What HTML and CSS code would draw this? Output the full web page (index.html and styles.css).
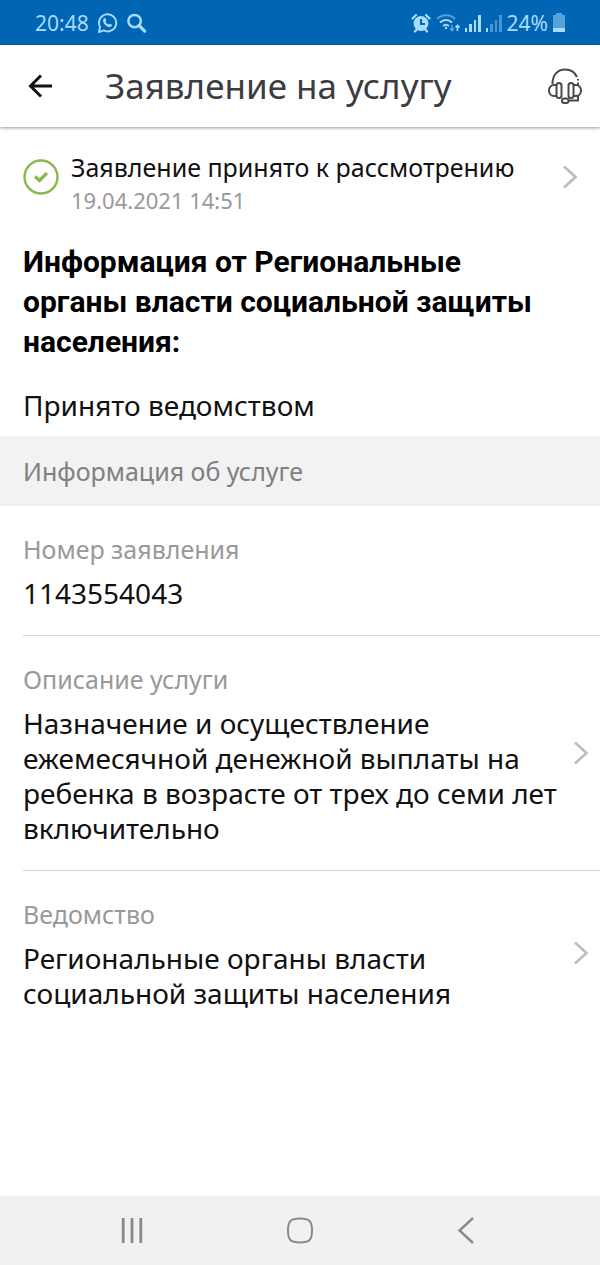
FILE: index.html
```html
<!DOCTYPE html>
<html lang="ru">
<head>
    <meta charset="UTF-8">
    <meta name="viewport" content="width=device-width, initial-scale=1.0">
    <title>Заявление на услугу</title>
    <link rel="stylesheet" href="styles.css">
</head>
<body>
    <div class="status-bar">
        <div class="status-left">
            <span>20:48</span>
            <svg width="21" height="22" viewBox="0 0 22 22" fill="none" stroke="currentColor" stroke-width="2">
                <path d="M2 20.500l1.200-5.400a9 9 0 1 1 3.800 3.700z" stroke-linejoin="round"/>
                <path d="M7.200 6.200c.6-.6 1.500-.4 1.800.3l.6 1.500c.2.6-.7 1.200-.6 1.600.5 1.300 1.700 2.400 3 2.900.4.1 1-.9 1.600-.6l1.500.7c.7.4.7 1.200.1 1.800-1 1-2.400 1.100-4 .4-2.200-.9-3.800-2.700-4.500-4.600-.5-1.500-.4-3 .5-4z" fill="currentColor" stroke="none"/>
            </svg>
            <svg width="21" height="22" viewBox="0 0 22 22" fill="none" stroke="currentColor">
                <circle cx="9" cy="9" r="6.500" stroke-width="2.600"/>
                <path d="M13.500 13.500l6 6" stroke-width="3.400" stroke-linecap="round"/>
            </svg>
        </div>
        <div class="status-right">
            <svg width="20" height="20" viewBox="0 0 20 20">
                <circle cx="10" cy="10.500" r="7.400" fill="currentColor"/>
                <path d="M1.500 5.500l3.500-3.500M18.500 5.500L15 2M4 18.500l2-2.500M16 18.500l-2-2.500" stroke="currentColor" stroke-width="2.200" stroke-linecap="round"/>
                <path d="M10 6v5h4" fill="none" stroke="#0066b3" stroke-width="2"/>
            </svg>
            <svg width="24" height="20" viewBox="0 0 24 20" fill="none" stroke="currentColor" stroke-width="2">
                <path d="M1 6c5-5 13-5 18 0" opacity=".5"/>
                <path d="M4 9.500c3.500-3.500 8.500-3.500 12 0"/>
                <path d="M7 13c2-1.700 4-1.700 6 0"/>
                <circle cx="10" cy="15" r="1.200" fill="currentColor" stroke="none"/>
                <path d="M16 12v5M14 15.500l2 2 2-2" stroke-width="1.400" opacity=".6"/>
                <path d="M21.500 18v-5M19.500 14.500l2-2 2 2" stroke-width="1.600"/>
            </svg>
            <svg width="16" height="20" viewBox="0 0 16 20" fill="currentColor">
                <path d="M0 15h2v4H0zM4 11h3v8H4zM9 7h2v12H9zM13 2h3v17h-3z"/>
            </svg>
            <svg width="16" height="20" viewBox="0 0 16 20" fill="currentColor">
                <path d="M0 15h2v4H0z"/>
                <path d="M4 11h3v8H4zM9 7h2v12H9zM13 2h3v17h-3z" opacity=".4"/>
            </svg>
            <span>24%</span>
            <svg width="12" height="20" viewBox="0 0 12 20" fill="currentColor">
                <path d="M3 0h6v2h3v13H0V2h3z" opacity=".5"/>
                <path d="M0 15h12v4H0z"/>
            </svg>
        </div>
    </div>

    <header class="header">
        <button class="icon-btn" aria-label="Назад">
            <svg width="24" height="24" viewBox="0 0 24 24" fill="none" stroke="#111" stroke-width="3">
                <path d="M24 12H3M13 1.500L2.500 12 13 22.500"/>
            </svg>
        </button>
        <h1 class="title">Заявление на услугу</h1>
        <button class="icon-btn" aria-label="Поддержка">
            <svg width="34" height="36" viewBox="0 0 34 36" fill="none" stroke="#484848" stroke-width="2">
                <path d="M4.500 16C4.500 6.500 10 1.500 17 1.500c5.500 0 10 3 12 7.500M30 11v1.500M30 14.500V17"/>
                <rect x="8.500" y="15" width="5" height="15" rx="2.500"/>
                <rect x="20.500" y="15" width="5" height="15" rx="2.500"/>
                <path d="M8.500 17H6c-3 0-5 2.500-5 5.500s2 5.500 5 5.500h2.500M25.500 17H28c3 0 5 2.500 5 5.500S31 28 28 28h-2.500"/>
                <path d="M30 28v4.500h-9.500"/>
                <rect x="14" y="30.500" width="6.500" height="4.500" rx="2.200"/>
            </svg>
        </button>
    </header>

    <main class="content">
        <a class="state" href="#">
            <svg width="36" height="36" viewBox="0 0 36 36" fill="none" stroke="#8bb84a">
                <circle cx="18" cy="18" r="16.500" stroke-width="2.400"/>
                <path d="M12 17.500l4.500 4 7.500-7.500" stroke-width="3.200"/>
            </svg>
            <span class="state-text">
                <span class="state-name">Заявление принято к рассмотрению</span>
                <span class="state-date">19.04.2021 14:51</span>
            </span>
            <svg class="chevron" width="14" height="24" viewBox="0 0 14 24">
                <path d="M1 1.500L12.500 12 1 22.500"/>
            </svg>
        </a>

        <section class="message">
            <h2>Информация от Региональные органы власти социальной защиты населения:</h2>
            <p>Принято ведомством</p>
        </section>

        <h3 class="section-title">Информация об услуге</h3>

        <div class="item">
            <span class="item-text">
                <span class="label">Номер заявления</span>
                <span class="value">1143554043</span>
            </span>
        </div>
        <a class="item" href="#">
            <span class="item-text">
                <span class="label">Описание услуги</span>
                <span class="value">Назначение и осуществление ежемесячной денежной выплаты на ребенка в возрасте от трех до семи лет включительно</span>
            </span>
            <svg class="chevron" width="14" height="24" viewBox="0 0 14 24">
                <path d="M1 1.500L12.500 12 1 22.500"/>
            </svg>
        </a>
        <a class="item" href="#">
            <span class="item-text">
                <span class="label">Ведомство</span>
                <span class="value">Региональные органы власти социальной защиты населения</span>
            </span>
            <svg class="chevron" width="14" height="24" viewBox="0 0 14 24">
                <path d="M1 1.500L12.500 12 1 22.500"/>
            </svg>
        </a>
    </main>

    <nav class="nav-bar">
        <button class="icon-btn" aria-label="Недавние">
            <svg width="28" height="28" viewBox="0 0 28 28" stroke="#8a8a8a" stroke-width="2.800">
                <path d="M5.200 1v25M14 1v25M22.800 1v25"/>
            </svg>
        </button>
        <button class="icon-btn" aria-label="Домой">
            <svg width="28" height="28" viewBox="0 0 28 28" fill="none" stroke="#8a8a8a" stroke-width="2">
                <path d="M14 1.500c9.500 0 12 2.500 12 12s-2.500 12-12 12-12-2.500-12-12 2.500-12 12-12z"/>
            </svg>
        </button>
        <button class="icon-btn" aria-label="Назад">
            <svg width="28" height="28" viewBox="0 0 28 28" fill="none" stroke="#8a8a8a" stroke-width="2.400">
                <path d="M19 1L5.500 13.500 19 26"/>
            </svg>
        </button>
    </nav>
</body>
</html>
```
FILE: styles.css
```css
* {
    box-sizing: border-box;
}

body {
    margin: 0;
    min-height: 100vh;
    display: flex;
    flex-direction: column;
    font-family: "Noto Sans", "Open Sans", sans-serif;
    background-color: #fff;
    color: #111;
}

svg {
    display: block;
    flex-shrink: 0;
}

a {
    color: inherit;
    text-decoration: none;
}

/* Status bar */
.status-bar {
    display: flex;
    justify-content: space-between;
    align-items: center;
    height: 45px;
    padding: 0 35px;
    background-color: #0066b3;
    color: #a9dbff;
    font-size: 21px;
    line-height: 30px;
}

.status-left,
.status-right {
    display: flex;
    align-items: center;
}

.status-left {
    gap: 8px;
}

.status-right {
    gap: 5px;
}

/* Header */
.header {
    display: flex;
    align-items: center;
    height: 82px;
    padding: 0 18px 0 28px;
    box-shadow: 0 1px 3px rgba(0, 0, 0, 0.4);
}

.title {
    flex: 1;
    margin: 0 0 0 53px;
    font-size: 35px;
    line-height: 48px;
    font-weight: 400;
    color: #3c3c42;
}

.icon-btn {
    display: flex;
    padding: 0;
    border: none;
    background: none;
    cursor: pointer;
}

/* Content */
.content {
    flex: 1;
}

.state {
    display: flex;
    align-items: center;
    gap: 12px;
    padding: 0 23px;
}

.state-text {
    flex: 1;
    display: flex;
    flex-direction: column;
    padding: 24px 0 10px;
}

.state-name {
    font-size: 25px;
    line-height: 33px;
}

.state-date {
    font-size: 22px;
    line-height: 33px;
    color: #999;
}

.chevron {
    fill: none;
    stroke: #bdbdbd;
    stroke-width: 2.6;
}

.message {
    padding: 15px 23px 13px;
}

.message h2 {
    margin: 0 0 26px;
    padding-right: 40px;
    font-family: Roboto, sans-serif;
    font-size: 30px;
    line-height: 40px;
    font-weight: 700;
    color: #000;
}

.message p {
    margin: 0;
    font-size: 28px;
    line-height: 35px;
}

.section-title {
    margin: 0;
    padding: 18px 23px 17px;
    background-color: #f2f2f2;
    font-size: 25px;
    line-height: 35px;
    font-weight: 400;
    color: #808080;
}

.item {
    display: flex;
    align-items: center;
    gap: 16px;
    margin-left: 23px;
    padding-right: 12px;
    border-bottom: 1px solid #d4d4d4;
}

.item:last-child {
    border-bottom: none;
}

.item-text {
    flex: 1;
    display: flex;
    flex-direction: column;
    gap: 12px;
    padding: 28px 0 24px;
}

.label {
    font-size: 25px;
    line-height: 30px;
    color: #999;
}

.value {
    font-size: 28px;
    line-height: 35px;
}

/* Navigation */
.nav-bar {
    display: flex;
    justify-content: center;
    align-items: center;
    gap: 140px;
    height: 69px;
    background-color: #f1f1f1;
}
```
